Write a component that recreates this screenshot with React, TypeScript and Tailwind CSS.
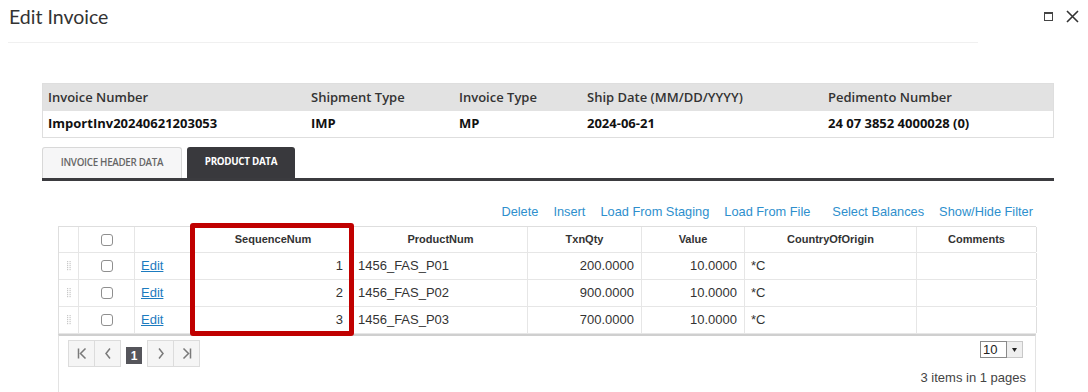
import React from "react";

const gridCols = "grid grid-cols-[20px_56px_58px_161px_174px_114px_103px_172px_120px]";

const rows = [
  { seq: 1, prod: "1456_FAS_P01", qty: "200.0000", val: "10.0000", coo: "*C" },
  { seq: 2, prod: "1456_FAS_P02", qty: "900.0000", val: "10.0000", coo: "*C" },
  { seq: 3, prod: "1456_FAS_P03", qty: "700.0000", val: "10.0000", coo: "*C" },
];

function Checkbox() {
  return <div className="w-[12px] h-[12px] border border-[#8f8f8f] rounded-[3px] bg-white" />;
}

function Grip() {
  const dots = [];
  for (let r = 0; r < 5; r++) {
    for (let c = 0; c < 2; c++) {
      dots.push(<rect key={`${r}-${c}`} x={c * 2.5} y={r * 2} width="1.2" height="1.2" fill="#c8c8c8" />);
    }
  }
  return (
    <svg width="4" height="10" viewBox="0 0 4 10">
      {dots}
    </svg>
  );
}

function PagerBtn({ children, extra = "" }: { children: React.ReactNode; extra?: string }) {
  return (
    <div className={`w-[27px] h-[27px] border border-[#dcdcdc] bg-[#f5f5f5] flex items-center justify-center ${extra}`}>
      {children}
    </div>
  );
}

export default function App() {
  const sans = "font-['Liberation_Sans',Arial,sans-serif]";
  const open = "font-['Open_Sans','Noto_Sans',sans-serif]";
  return (
    <div className="w-[1088px] h-[392px] bg-white overflow-hidden">
      {/* Title bar */}
      <div className="flex items-start h-[43px]">
        <div className="ml-[8px] w-[970px] h-[43px] border-b border-[#f0f0f0] pl-[1px] pt-[5px] text-[19.5px] leading-[24px] text-[#333] font-['Lato',sans-serif]">
          Edit Invoice
        </div>
        <div className="ml-auto flex items-center pr-[9px] pt-[10px] gap-[13px]">
          <div className="w-[9px] h-[9px] border border-[#444] border-t-[2px]" />
          <svg width="13" height="13" viewBox="0 0 13 13">
            <path d="M1 1 L12 12 M12 1 L1 12" stroke="#333" strokeWidth="1.6" fill="none" />
          </svg>
        </div>
      </div>

      <div className="ml-[42px] w-[1012px] mt-[40px]">
        {/* Info table */}
        <div className={`border border-[#dedede] ${open} text-[13px]`}>
          <div className="grid grid-cols-[263px_148px_128px_241px_1fr] h-[27px] bg-[#e2e2e2] items-center font-semibold text-[#333]">
            <div className="pl-[5px]">Invoice Number</div>
            <div className="pl-[5px]">Shipment Type</div>
            <div className="pl-[5px]">Invoice Type</div>
            <div className="pl-[5px]">Ship Date (MM/DD/YYYY)</div>
            <div className="pl-[5px]">Pedimento Number</div>
          </div>
          <div className="grid grid-cols-[263px_148px_128px_241px_1fr] h-[26px] bg-white items-center font-bold text-[#111]">
            <div className="pl-[5px]">ImportInv20240621203053</div>
            <div className="pl-[5px]">IMP</div>
            <div className="pl-[5px]">MP</div>
            <div className="pl-[5px]">2024-06-21</div>
            <div className="pl-[5px]">24 07 3852 4000028 (0)</div>
          </div>
        </div>

        {/* Tabs */}
        <div className={`flex gap-[5px] mt-[9px] ${open}`}>
          <div className="w-[140px] h-[31px] border border-b-0 border-[#d8d8d8] rounded-t-[3px] bg-[#f6f6f7] flex items-center justify-center text-[9.8px] font-semibold text-[#666] tracking-[-0.3px]">
            INVOICE HEADER DATA
          </div>
          <div className="w-[108px] h-[31px] rounded-t-[3px] bg-[#39393d] flex items-center justify-center text-[9.8px] font-bold text-white tracking-[-0.3px]">
            PRODUCT DATA
          </div>
        </div>
        <div className="h-[3px] bg-[#3b3b3f]" />

        {/* Actions */}
        <div className={`flex justify-end pr-[21px] pt-[23px] mb-[7px] text-[12.8px] leading-[15px] text-[#2e8fcd] ${sans}`}>
          <span>Delete</span>
          <span className="ml-[15px]">Insert</span>
          <span className="ml-[15px]">Load From Staging</span>
          <span className="ml-[15px]">Load From File</span>
          <span className="ml-[22px]">Select Balances</span>
          <span className="ml-[15px]">Show/Hide Filter</span>
        </div>

        {/* Grid */}
        <div className={`relative ml-[16px] w-[978px] ${sans}`}>
          <div className="border-t border-l border-[#dedede]">
            <div className={`${gridCols} h-[26px] border-b border-[#e6e6e6] text-[11px] font-bold text-[#333]`}>
              <div className="border-r border-[#e6e6e6]" />
              <div className="border-r border-[#e6e6e6] flex items-center justify-center">
                <Checkbox />
              </div>
              <div className="border-r border-[#e6e6e6]" />
              <div className="border-r border-[#e6e6e6] flex items-center justify-center">SequenceNum</div>
              <div className="border-r border-[#e6e6e6] flex items-center justify-center">ProductNum</div>
              <div className="border-r border-[#e6e6e6] flex items-center justify-center">TxnQty</div>
              <div className="border-r border-[#e6e6e6] flex items-center justify-center">Value</div>
              <div className="border-r border-[#e6e6e6] flex items-center justify-center">CountryOfOrigin</div>
              <div className="border-r border-[#dedede] flex items-center justify-center">Comments</div>
            </div>
            {rows.map((r) => (
              <div key={r.seq} className={`${gridCols} h-[27px] border-b border-[#e6e6e6] text-[13px] text-[#333]`}>
                <div className="border-r border-[#e6e6e6] flex items-center justify-center">
                  <Grip />
                </div>
                <div className="border-r border-[#e6e6e6] flex items-center justify-center">
                  <Checkbox />
                </div>
                <div className="border-r border-[#e6e6e6] flex items-center pl-[6px]">
                  <span className="text-[#1c7bbf] underline">Edit</span>
                </div>
                <div className="border-r border-[#e6e6e6] flex items-center justify-end pr-[10px]">{r.seq}</div>
                <div className="border-r border-[#e6e6e6] flex items-center pl-[4px]">{r.prod}</div>
                <div className="border-r border-[#e6e6e6] flex items-center justify-end pr-[7px]">{r.qty}</div>
                <div className="border-r border-[#e6e6e6] flex items-center justify-end pr-[7px]">{r.val}</div>
                <div className="border-r border-[#e6e6e6] flex items-center pl-[6px]">{r.coo}</div>
                <div className="border-r border-[#dedede]" />
              </div>
            ))}
          </div>

          {/* Footer / pager */}
          <div className="h-[60px] border-t-2 border-[#cfcfcf] border-l border-r border-l-[#e3e3e3] border-r-[#e3e3e3] flex justify-between">
            <div className="flex items-start pl-[9px] pt-[4px]">
              <div className="flex">
                <PagerBtn>
                  <svg width="10" height="11" viewBox="0 0 10 11">
                    <path d="M1.5 0.5 V10.5 M8.5 0.5 L3.5 5.5 L8.5 10.5" stroke="#7a7a7a" strokeWidth="1.5" fill="none" />
                  </svg>
                </PagerBtn>
                <PagerBtn extra="-ml-px">
                  <svg width="6" height="11" viewBox="0 0 6 11">
                    <path d="M5 0.5 L1 5.5 L5 10.5" stroke="#7a7a7a" strokeWidth="1.5" fill="none" />
                  </svg>
                </PagerBtn>
              </div>
              <div className="ml-[5px] mt-[7px] w-[16px] h-[17px] bg-[#55555b] text-white text-[12px] font-bold flex items-center justify-center">
                1
              </div>
              <div className="flex ml-[5px]">
                <PagerBtn>
                  <svg width="6" height="11" viewBox="0 0 6 11">
                    <path d="M1 0.5 L5 5.5 L1 10.5" stroke="#7a7a7a" strokeWidth="1.5" fill="none" />
                  </svg>
                </PagerBtn>
                <PagerBtn extra="-ml-px">
                  <svg width="10" height="11" viewBox="0 0 10 11">
                    <path d="M1.5 0.5 L6.5 5.5 L1.5 10.5 M8.5 0.5 V10.5" stroke="#7a7a7a" strokeWidth="1.5" fill="none" />
                  </svg>
                </PagerBtn>
              </div>
            </div>
            <div className="flex flex-col items-end pr-[9px] pt-[5px]">
              <div className="flex mr-[3px] h-[17px]">
                <div className="w-[27px] h-[17px] border border-[#8a8a8a] text-[13px] leading-[15px] text-[#222] pl-[2px]">10</div>
                <div className="w-[16px] h-[17px] border border-l-0 border-[#c8c8c8] bg-[#efefef] flex items-center justify-center">
                  <svg width="5" height="4" viewBox="0 0 5 4">
                    <path d="M0 0 H5 L2.5 4 Z" fill="#222" />
                  </svg>
                </div>
              </div>
              <div className="mt-[12px] text-[13px] leading-[15px] text-[#444]">3 items in 1 pages</div>
            </div>
          </div>

          {/* Highlight box */}
          <div className="absolute left-[132px] top-[-3px] w-[164px] h-[113px] border-[5px] border-[#c00000] rounded-[3px] pointer-events-none" />
        </div>
      </div>
    </div>
  );
}
